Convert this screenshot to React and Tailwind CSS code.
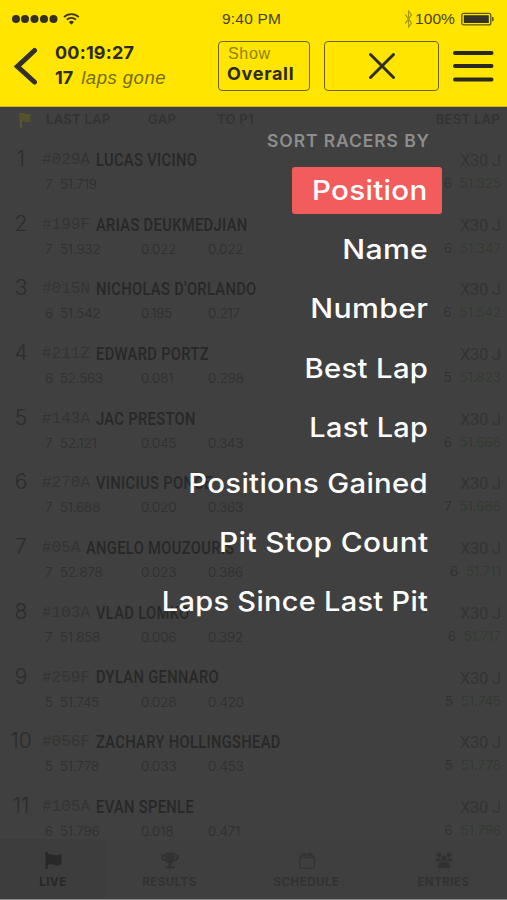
import { FaFlag, FaTrophy } from "react-icons/fa";
import { FiBluetooth } from "react-icons/fi";

const racers = [
  { pos: 1, num: "#029A", name: "LUCAS VICINO", lap: 7, last: "51.719", bestLap: 6, best: "51.325" },
  { pos: 2, num: "#199F", name: "ARIAS DEUKMEDJIAN", lap: 7, last: "51.932", gap: "0.022", toP1: "0.022", bestLap: 6, best: "51.347" },
  { pos: 3, num: "#015N", name: "NICHOLAS D'ORLANDO", lap: 6, last: "51.542", gap: "0.195", toP1: "0.217", bestLap: 6, best: "51.542" },
  { pos: 4, num: "#211Z", name: "EDWARD PORTZ", lap: 6, last: "52.563", gap: "0.081", toP1: "0.298", bestLap: 5, best: "51.823" },
  { pos: 5, num: "#143A", name: "JAC PRESTON", lap: 7, last: "52.121", gap: "0.045", toP1: "0.343", bestLap: 6, best: "51.668" },
  { pos: 6, num: "#270A", name: "VINICIUS PONCE", lap: 7, last: "51.688", gap: "0.020", toP1: "0.363", bestLap: 7, best: "51.688" },
  { pos: 7, num: "#05A", name: "ANGELO MOUZOURIS", lap: 7, last: "52.878", gap: "0.023", toP1: "0.386", bestLap: 6, best: "51.711" },
  { pos: 8, num: "#103A", name: "VLAD LOMKO", lap: 7, last: "51.858", gap: "0.006", toP1: "0.392", bestLap: 6, best: "51.717" },
  { pos: 9, num: "#259F", name: "DYLAN GENNARO", lap: 5, last: "51.745", gap: "0.028", toP1: "0.420", bestLap: 5, best: "51.745" },
  { pos: 10, num: "#056F", name: "ZACHARY HOLLINGSHEAD", lap: 5, last: "51.778", gap: "0.033", toP1: "0.453", bestLap: 5, best: "51.778" },
  { pos: 11, num: "#105A", name: "EVAN SPENLE", lap: 6, last: "51.796", gap: "0.018", toP1: "0.471", bestLap: 6, best: "51.796" },
];

const sortOptions = [
  { label: "Position", active: true, row: "h-[47px]", stretch: "scale-x-[1.075]" },
  { label: "Name", row: "mt-[6px] h-[59px]", stretch: "scale-x-[1.1]" },
  { label: "Number", row: "h-[60px]", stretch: "scale-x-[1.1]" },
  { label: "Best Lap", row: "h-[59px]", stretch: "scale-x-[1.065]" },
  { label: "Last Lap", row: "h-[60px]", stretch: "scale-x-[1.05]" },
  { label: "Positions Gained", row: "h-[52px]", stretch: "scale-x-[1.065]" },
  { label: "Pit Stop Count", row: "mt-[4px] h-[58px]", stretch: "scale-x-[1.088]" },
  { label: "Laps Since Last Pit", row: "h-[60px]", stretch: "scale-x-[1.052]" },
];

function CalendarIcon({ className }) {
  return (
    <svg viewBox="0 0 18 18" fill="none" stroke="currentColor" strokeWidth="1.2" className={className}>
      <rect x="1.200" y="5.500" width="15.600" height="11.700" rx="1.500" />
      <path d="M1.200 7 3.500 3h11l2.300 4" />
      <path d="M4.500 4.500V2a1.200 1.200 0 0 1 2.400 0v2.500M11.100 4.500V2a1.200 1.200 0 0 1 2.400 0v2.500" />
    </svg>
  );
}

function GroupIcon({ className }) {
  return (
    <svg viewBox="0 0 18 18" fill="currentColor" className={className}>
      <circle cx="3.800" cy="3" r="2.400" />
      <circle cx="14.200" cy="3" r="2.400" />
      <circle cx="9" cy="6.800" r="3.100" />
      <path d="M0 9.500C0 7 1.500 5.800 3.800 5.800L5 7c0 1.500.5 2.500 1.200 3.300H1.500C.5 10.300 0 10 0 9.500z" />
      <path d="M18 9.500c0-2.500-1.500-3.700-3.800-3.700L13 7c0 1.500-.5 2.500-1.200 3.300h4.700c1 0 1.500-.3 1.500-.8z" />
      <path d="M2.500 15c0-3 1.500-4.300 4-4.300h5c2.500 0 4 1.300 4 4.300 0 1.500-.8 2.300-2.300 2.300H4.800C3.300 17.300 2.500 16.500 2.500 15z" />
    </svg>
  );
}

const tabs = [
  { label: "LIVE", Icon: FaFlag, active: true, width: "w-[106px]" },
  { label: "RESULTS", Icon: FaTrophy, width: "w-[127px]" },
  { label: "SCHEDULE", Icon: CalendarIcon, width: "w-[147px]" },
  { label: "ENTRIES", Icon: GroupIcon, width: "w-[127px]" },
];

function StatusBar() {
  return (
    <div className="flex h-[38px] items-center px-3 font-['Liberation_Sans',sans-serif] text-[15.5px] text-[#49430f]">
      <div className="flex w-[210px] items-center">
        <svg width="70" height="16" viewBox="0 0 70 16" fill="none">
          {[4, 13, 22.5, 32, 41.5].map((cx) => (
            <circle key={cx} cx={cx} cy="8" r="4" fill="#332f25" />
          ))}
          <g stroke="#3c3718" strokeWidth="1.7">
            <path d="M52 6.1a10.5 10.5 0 0 1 14.8 0" />
            <path d="M54.8 8.7a6.6 6.6 0 0 1 9.2 0" />
          </g>
          <path d="M56.8 10.9a3.8 3.8 0 0 1 5.2 0l-2.6 2.8z" fill="#3c3718" />
        </svg>
      </div>
      <span className="flex-1 tracking-[0.2px]">9:40 PM</span>
      <FiBluetooth className="h-[18px] w-[13px] text-[#a99a12]" strokeWidth={2} preserveAspectRatio="none" />
      <span className="tracking-[0.1px]">100%</span>
      <svg width="34" height="16" viewBox="0 0 34 16" className="ml-1.5" fill="none">
        <rect x="0.8" y="2.3" width="29" height="11.6" rx="2" stroke="#5e5617" strokeWidth="1.3" />
        <rect x="2.8" y="4.2" width="25" height="7.8" rx="0.5" fill="#333329" />
        <path d="M31 6h.6a1 1 0 0 1 1 1v2.200a1 1 0 0 1-1 1H31z" fill="#5e5617" />
      </svg>
    </div>
  );
}

function Header() {
  return (
    <header className="h-[107px] shrink-0 border-b border-[#c7b91f] bg-[#ffe500] text-[#2d2a22]">
      <StatusBar />
      <div className="flex items-center pl-[14px] pt-[2px]">
        <button aria-label="Back">
          <svg width="24" height="40" viewBox="0 0 24 40" fill="none" stroke="#332f2a" strokeWidth="5" strokeLinecap="round">
            <path d="M20.500 4.500 3.500 20.500 20.500 36" />
          </svg>
        </button>
        <div className="ml-[17px] w-[163px] whitespace-nowrap pb-px">
          <div className="font-['Inter',sans-serif] text-[18px] font-bold leading-[25px] tracking-[0.2px]">00:19:27</div>
          <div className="flex items-baseline leading-[25px]">
            <span className="font-['Inter',sans-serif] text-[18px] font-bold">17</span>
            <span className="ml-2 font-['Liberation_Sans',sans-serif] text-[18.500px] italic tracking-[0.5px] text-[#756b12]">laps gone</span>
          </div>
        </div>
        <button className="h-[50px] w-[92px] rounded-[4px] border-[1.5px] border-[#6d6418] pb-[3px] pl-2 text-left">
          <div className="pl-px font-['Liberation_Sans',sans-serif] text-[16px] leading-[20px] tracking-[0.7px] text-[#8f820f]">Show</div>
          <div className="font-['Inter',sans-serif] text-[18px] font-bold leading-[20px] tracking-[0.7px]">Overall</div>
        </button>
        <button aria-label="Close" className="ml-[14px] flex h-[50px] w-[115px] items-center justify-center rounded-[4px] border-[1.5px] border-[#6d6418]">
          <svg width="28" height="28" viewBox="0 0 28 28" stroke="#2f2c22" strokeWidth="3" strokeLinecap="round">
            <path d="M2.500 2.500 25.500 25.500M25.500 2.500 2.500 25.500" />
          </svg>
        </button>
        <button aria-label="Menu" className="ml-[13px]">
          <svg width="42" height="34" viewBox="0 0 42 34" stroke="#2b2820" strokeWidth="4" strokeLinecap="round">
            <path d="M3 4h36.500M3 17h36.500M3 30.500h36.500" />
          </svg>
        </button>
      </div>
    </header>
  );
}

function RacerRow({ racer }) {
  return (
    <li className="flex h-[64.7px] shrink-0 border-t border-[#3e3e3e] font-['Inter',sans-serif]">
      <div className="w-[42px] pt-[9px] text-center text-[21px] font-light leading-[26px] text-[#2c2c2c]">{racer.pos}</div>
      <div className="flex-1 pt-[11px]">
        <div className="flex h-[24px] items-center whitespace-nowrap">
          <span className="mr-[6px] font-['Liberation_Mono',monospace] text-[16px] text-[#343434]">{racer.num}</span>
          <span className="origin-left scale-x-[0.84] font-['Roboto',sans-serif] text-[17.500px] font-medium tracking-[0.4px] text-[#282828]">
            {racer.name}
          </span>
        </div>
        <div className="flex pt-[2px] text-[13.500px] font-light leading-[20px] tracking-[-0.2px] text-[#2e2e2e]">
          <span className="w-[15px] pl-[3px]">{racer.lap}</span>
          <span className="ml-[3px] w-[81px]">{racer.last}</span>
          <span className="w-[67px]">{racer.gap}</span>
          <span>{racer.toP1}</span>
        </div>
      </div>
      <div className="pr-[6px] pt-[12px] text-right">
        <div className="font-['Roboto',sans-serif] text-[16.500px] leading-[24px] tracking-[-0.2px] text-[#343434]">X30 J</div>
        <div className="text-[13.500px] font-light leading-[20px] text-[#2e2e2e]">
          {racer.bestLap} <span className="ml-1 text-[#2f3a2e]">{racer.best}</span>
        </div>
      </div>
    </li>
  );
}

export default function App() {
  return (
    <div className="flex h-[900px] w-[507px] flex-col overflow-hidden bg-[#404040]">
      <Header />
      <main className="relative flex min-h-0 flex-1 flex-col">
        <div className="flex h-[29px] shrink-0 items-center pb-[3px] pr-[7px] font-['Inter',sans-serif] text-[13px] font-semibold tracking-[0.3px] text-[#333333]">
          <div className="w-[46px] pl-[18px]">
            <svg width="14" height="17" viewBox="0 0 14 17" fill="#55532b">
              <path d="M1 1h5l1 1h6.500l-2 4 1.500 4H7L6 9H4v7H2z" />
            </svg>
          </div>
          <span className="w-[102px]">LAST LAP</span>
          <span className="w-[69px]">GAP</span>
          <span className="flex-1">TO P1</span>
          <span>BEST LAP</span>
        </div>
        <ul className="flex min-h-0 flex-1 flex-col overflow-hidden">
          {racers.map((racer) => (
            <RacerRow key={racer.pos} racer={racer} />
          ))}
        </ul>
        <nav className="flex h-[61px] shrink-0 border-b border-[#8c8c8c] bg-[#3f3f3f] font-['Inter',sans-serif]">
          {tabs.map(({ label, Icon, active, width }) => (
            <div
              key={label}
              className={`flex flex-col items-center pt-[13px] text-[11.500px] font-bold leading-[14px] tracking-[0.5px] ${width} ${
                active ? "bg-[#3d3d3d] text-[#282828]" : "text-[#323232]"
              }`}
            >
              <Icon className="mb-[6px] h-[17px] w-[18px]" />
              {label}
            </div>
          ))}
        </nav>

        {/* Sort menu on top of the dimmed list */}
        <div className="absolute right-[65px] top-[21px] flex flex-col items-end font-['Inter',sans-serif]">
          <h2 className="h-[39px] pr-3 pt-px text-[17.500px] font-semibold leading-[24px] tracking-[0.9px] text-[#8d8d8d]">SORT RACERS BY</h2>
          {sortOptions.map(({ label, active, row, stretch }) => (
            <button
              key={label}
              className={`flex items-center justify-end whitespace-nowrap pr-[14px] text-[27.500px] font-medium tracking-[0.3px] text-white ${row} ${
                active ? "w-[150px] rounded-[3px] bg-[#f25c5c]" : ""
              }`}
            >
              <span className={`origin-right ${stretch}`}>{label}</span>
            </button>
          ))}
        </div>
      </main>
    </div>
  );
}
